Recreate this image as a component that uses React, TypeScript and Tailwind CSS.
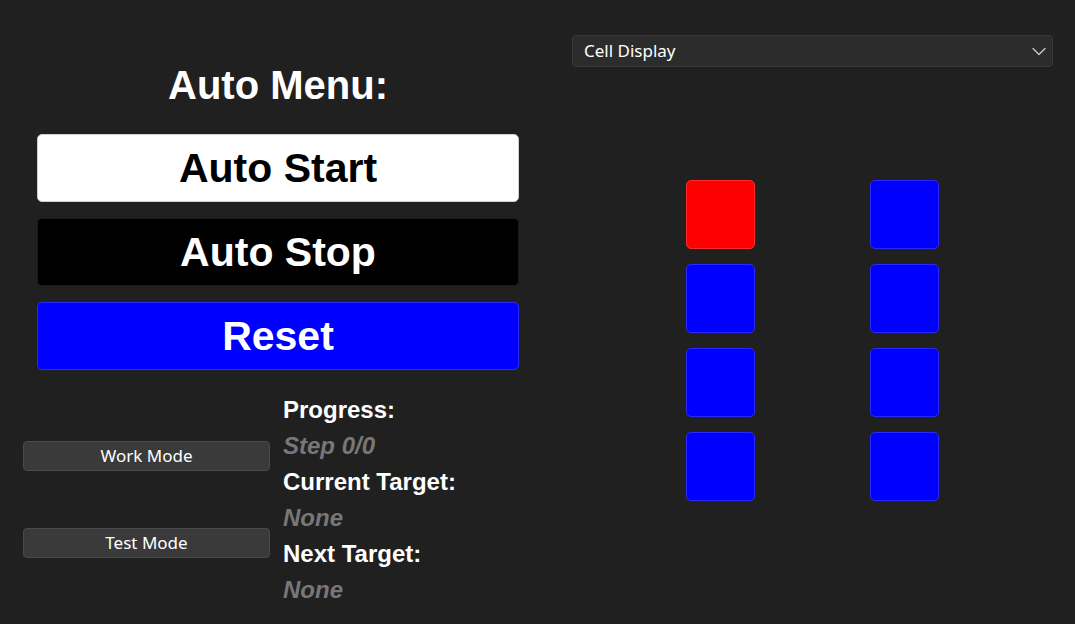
import React from 'react';

const cells = ['red', 'blue', 'blue', 'blue', 'blue', 'blue', 'blue', 'blue'];

const Cell = ({ color }: { color: string }) => (
  <div
    className={
      color === 'red'
        ? 'h-[69px] w-[69px] rounded-[5px] border border-[#ff2a2a] bg-[#ff0000]'
        : 'h-[69px] w-[69px] rounded-[5px] border border-[#2a2aff] bg-[#0000ff]'
    }
  />
);

const ModeButton = ({ label }: { label: string }) => (
  <button className="h-[30px] w-[247px] rounded-[4px] border border-[#4a4a4a] bg-[#3a3a3a] font-['Noto_Sans',sans-serif] text-[17px] text-white">
    {label}
  </button>
);

export default function App() {
  return (
    <div className="flex h-[624px] w-[1075px] bg-[#202020] font-['Liberation_Sans',Arial,sans-serif] text-white">
      {/* left: auto menu */}
      <div className="flex w-[556px] flex-col">
        <h1 className="mt-[61px] text-center text-[40px] leading-[48px] font-bold">Auto Menu:</h1>

        <div className="mt-[25px] flex flex-col gap-4 px-[37px]">
          <button className="h-[68px] rounded-[5px] border border-[#d0d0d0] bg-white pt-[2px] text-[41px] font-bold text-black">
            Auto Start
          </button>
          <button className="h-[68px] rounded-[5px] border border-[#1a1a1a] bg-black pt-[2px] text-[41px] font-bold text-white">
            Auto Stop
          </button>
          <button className="h-[68px] rounded-[5px] border border-[#2a2aff] bg-[#0000ff] pt-[2px] text-[41px] font-bold text-white">
            Reset
          </button>
        </div>

        <div className="mt-[22px] flex">
          <div className="ml-[23px] flex flex-col gap-[57px] pt-[49px]">
            <ModeButton label="Work Mode" />
            <ModeButton label="Test Mode" />
          </div>
          <div className="ml-[13px] flex flex-col text-[24px] leading-[36px] font-bold">
            <span>Progress:</span>
            <span className="text-[#777777] italic">Step 0/0</span>
            <span>Current Target:</span>
            <span className="text-[#777777] italic">None</span>
            <span>Next Target:</span>
            <span className="text-[#777777] italic">None</span>
          </div>
        </div>
      </div>

      {/* right: cell display */}
      <div className="ml-4 flex w-[481px] flex-col">
        <div className="mt-[35px] flex h-[32px] items-center justify-between rounded-[4px] border border-[#3a3a3a] bg-[#2c2c2c] pr-[4px] pl-[11px] font-['Noto_Sans',sans-serif] text-[17px]">
          <span>Cell Display</span>
          <svg width="18" height="18" viewBox="0 0 18 18" fill="none">
            <path d="M3 6.5l6 6 6-6" stroke="#d0d0d0" strokeWidth="1.2" strokeLinecap="round" strokeLinejoin="round" />
          </svg>
        </div>

        <div className="mt-[113px] grid grid-flow-col grid-rows-4 justify-center gap-x-[115px] gap-y-[15px]">
          {cells.map((c, i) => (
            <Cell key={i} color={c} />
          ))}
        </div>
      </div>
    </div>
  );
}
